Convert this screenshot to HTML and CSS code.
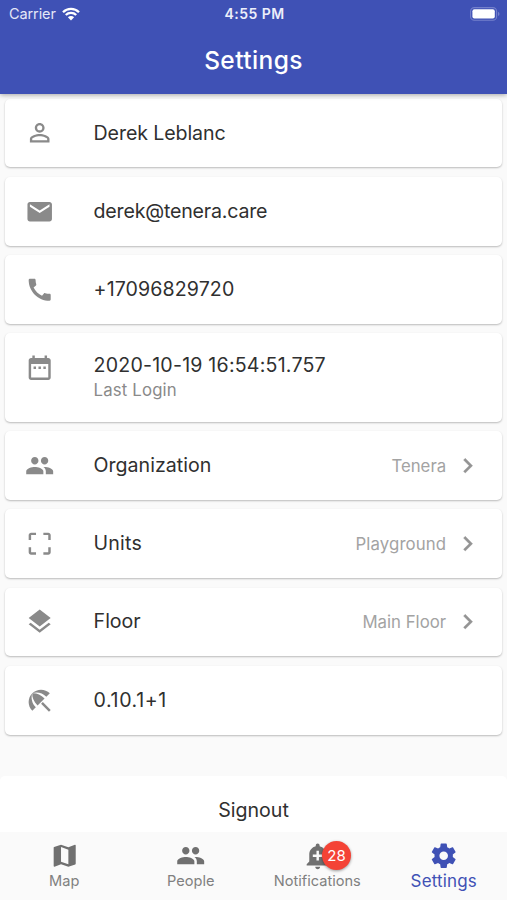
FILE: index.html
```html
<!DOCTYPE html>
<html lang="en">
<head>
  <meta charset="UTF-8">
  <title>Settings</title>
  <link rel="stylesheet" href="styles.css">
</head>
<body>
  <header class="header">
    <div class="status">
      <div class="carrier">
        <span>Carrier</span>
        <svg class="wifi" viewBox="0 0 18 14">
          <path d="M1 5.2a11.3 11.3 0 0 1 16 0M3.8 8a7.4 7.4 0 0 1 10.4 0" fill="none" stroke="#fff" stroke-width="2.3"/>
          <path d="M5.9 10.2a4.4 4.4 0 0 1 6.2 0L9 13.5z" fill="#fff"/>
        </svg>
      </div>
      <span class="time">4:55 PM</span>
      <svg class="battery" viewBox="0 0 30 14">
        <rect x=".6" y=".6" width="26" height="12.6" rx="3.8" fill="none" stroke="#7480cb" stroke-width="1.1"/>
        <rect x="2.4" y="2.3" width="22.4" height="9.2" rx="2" fill="#fff"/>
        <path d="M28 4.7c2 .8 2 3.6 0 4.4z" fill="#7480cb"/>
      </svg>
    </div>
    <h1 class="title">Settings</h1>
  </header>

  <main class="list">
    <div class="card">
      <svg class="icon" viewBox="0 0 24 24"><path d="M12 5.9a2.1 2.1 0 1 1 0 4.2 2.1 2.1 0 0 1 0-4.2m0 9c2.97 0 6.1 1.46 6.1 2.1v1.1H5.9V17c0-.64 3.13-2.1 6.1-2.1M12 4C9.79 4 8 5.79 8 8s1.79 4 4 4 4-1.79 4-4-1.79-4-4-4zm0 9c-2.67 0-8 1.34-8 4v3h16v-3c0-2.66-5.33-4-8-4z"/></svg>
      <span class="name t-name">Derek Leblanc</span>
    </div>
    <div class="card">
      <svg class="icon" viewBox="0 0 24 24"><path d="M20 4H4c-1.1 0-1.99.9-1.99 2L2 18c0 1.1.9 2 2 2h16c1.1 0 2-.9 2-2V6c0-1.1-.9-2-2-2zm0 4l-8 5-8-5V6l8 5 8-5v2z"/></svg>
      <span class="name t-mail">derek@tenera.care</span>
    </div>
    <div class="card">
      <svg class="icon" viewBox="0 0 24 24"><path d="M20.01 15.38c-1.23 0-2.42-.2-3.53-.56-.35-.12-.74-.03-1.01.24l-1.57 1.97c-2.83-1.35-5.48-3.9-6.89-6.83l1.95-1.66c.27-.28.35-.67.24-1.02-.37-1.11-.56-2.3-.56-3.53 0-.54-.45-.99-.99-.99H4.19C3.65 3 3 3.24 3 3.99 3 13.28 10.73 21 20.01 21c.71 0 .99-.63.99-1.18v-3.45c0-.54-.45-.99-.99-.99z"/></svg>
      <span class="name t-phone">+17096829720</span>
    </div>
    <div class="card tall">
      <svg class="icon" viewBox="0 0 24 24"><path d="M9 11H7v2h2v-2zm4 0h-2v2h2v-2zm4 0h-2v2h2v-2zm2-7h-1V2h-2v2H8V2H6v2H5c-1.11 0-1.99.9-1.99 2L3 20c0 1.1.89 2 2 2h14c1.1 0 2-.9 2-2V6c0-1.1-.9-2-2-2zm0 16H5V9h14v11z"/></svg>
      <div class="lines">
        <span class="name t-date">2020-10-19 16:54:51.757</span>
        <span class="sub">Last Login</span>
      </div>
    </div>
    <div class="card">
      <svg class="icon" viewBox="0 0 24 24"><path d="M16 11c1.66 0 2.99-1.34 2.99-3S17.66 5 16 5s-3 1.34-3 3 1.34 3 3 3zm-8 0c1.66 0 2.99-1.34 2.99-3S9.66 5 8 5 5 6.34 5 8s1.34 3 3 3zm0 2c-2.33 0-7 1.17-7 3.5V19h14v-2.5c0-2.33-4.67-3.5-7-3.5zm8 0c-.29 0-.62.02-.97.05 1.16.84 1.97 1.97 1.97 3.45V19h6v-2.5c0-2.33-4.67-3.5-7-3.5z"/></svg>
      <span class="name">Organization</span>
      <span class="value">Tenera</span>
      <svg class="chevron" viewBox="0 0 24 24"><path d="M10 6L8.59 7.41 13.17 12l-4.58 4.59L10 18l6-6z"/></svg>
    </div>
    <div class="card">
      <svg class="icon" viewBox="0 0 24 24"><path d="M3 5v4h2V5h4V3H5c-1.1 0-2 .9-2 2zm2 10H3v4c0 1.1.9 2 2 2h4v-2H5v-4zm14 4h-4v2h4c1.1 0 2-.9 2-2v-4h-2v4zm0-16h-4v2h4v4h2V5c0-1.1-.9-2-2-2z"/></svg>
      <span class="name t-units">Units</span>
      <span class="value t-playground">Playground</span>
      <svg class="chevron" viewBox="0 0 24 24"><path d="M10 6L8.59 7.41 13.17 12l-4.58 4.59L10 18l6-6z"/></svg>
    </div>
    <div class="card">
      <svg class="icon" viewBox="0 0 24 24"><path d="M11.99 18.54l-7.37-5.73L3 14.07l9 7 9-7-1.63-1.27-7.38 5.74zM12 16l7.36-5.73L21 9l-9-7-9 7 1.63 1.27L12 16z"/></svg>
      <span class="name">Floor</span>
      <span class="value">Main Floor</span>
      <svg class="chevron" viewBox="0 0 24 24"><path d="M10 6L8.59 7.41 13.17 12l-4.58 4.59L10 18l6-6z"/></svg>
    </div>
    <div class="card">
      <svg class="icon" viewBox="0 0 24 24"><path d="M13.127 14.56l1.43-1.43 6.44 6.443L19.57 21zm4.293-5.73l2.86-2.86c-3.95-3.95-10.35-3.96-14.3-.02 3.93-1.3 8.31-.25 11.44 2.88zM5.95 5.98c-3.94 3.95-3.93 10.35.02 14.3l2.86-2.86C5.7 14.29 4.65 9.91 5.95 5.98zm.02-.02l-.01.01c-.38 3.01 1.17 6.88 4.3 10.02l5.73-5.73c-3.13-3.13-7.01-4.68-10.02-4.3z"/></svg>
      <span class="name t-version">0.10.1+1</span>
    </div>
    <div class="signout"><span class="name">Signout</span></div>
  </main>

  <nav class="nav">
    <div class="tab">
      <svg class="icon" viewBox="0 0 24 24"><path d="M20.5 3l-.16.03L15 5.1 9 3 3.36 4.9c-.21.07-.36.25-.36.48V20.5c0 .28.22.5.5.5l.16-.03L9 18.9l6 2.1 5.64-1.9c.21-.07.36-.25.36-.48V3.5c0-.28-.22-.5-.5-.5zM15 19l-6-2.11V5l6 2.11V19z"/></svg>
      <span>Map</span>
    </div>
    <div class="tab">
      <svg class="icon" viewBox="0 0 24 24"><path d="M16 11c1.66 0 2.99-1.34 2.99-3S17.66 5 16 5s-3 1.34-3 3 1.34 3 3 3zm-8 0c1.66 0 2.99-1.34 2.99-3S9.66 5 8 5 5 6.34 5 8s1.34 3 3 3zm0 2c-2.33 0-7 1.17-7 3.5V19h14v-2.5c0-2.33-4.67-3.5-7-3.5zm8 0c-.29 0-.62.02-.97.05 1.16.84 1.97 1.97 1.97 3.45V19h6v-2.5c0-2.33-4.67-3.5-7-3.5z"/></svg>
      <span>People</span>
    </div>
    <div class="tab">
      <svg class="icon" viewBox="0 0 24 24"><path d="M10.01 21.01c0 1.1.89 1.99 1.99 1.99s1.99-.89 1.99-1.99h-3.98zm8.87-4.19V11c0-3.25-2.25-5.97-5.29-6.69v-.72C13.59 2.71 12.88 2 12 2s-1.59.71-1.59 1.59v.72C7.37 5.03 5.12 7.75 5.12 11v5.82L3 18.94V20h18v-1.06l-2.12-2.12zM16 13.01h-3v3h-2v-3H8V11h3V8h2v3h3v2.01z"/></svg>
      <b class="badge">28</b>
      <span>Notifications</span>
    </div>
    <div class="tab active">
      <svg class="icon" viewBox="0 0 24 24"><path d="M19.43 12.98c.04-.32.07-.64.07-.98s-.03-.66-.07-.98l2.11-1.65c.19-.15.24-.42.12-.64l-2-3.46c-.12-.22-.39-.3-.61-.22l-2.49 1c-.52-.4-1.08-.73-1.69-.98l-.38-2.65C14.46 2.18 14.25 2 14 2h-4c-.25 0-.46.18-.49.42l-.38 2.65c-.61.25-1.17.59-1.69.98l-2.49-1c-.23-.09-.49 0-.61.22l-2 3.46c-.13.22-.07.49.12.64l2.11 1.65c-.04.32-.07.65-.07.98s.03.66.07.98l-2.11 1.65c-.19.15-.24.42-.12.64l2 3.46c.12.22.39.3.61.22l2.49-1c.52.4 1.08.73 1.69.98l.38 2.65c.03.24.24.42.49.42h4c.25 0 .46-.18.49-.42l.38-2.65c.61-.25 1.17-.59 1.69-.98l2.49 1c.23.09.49 0 .61-.22l2-3.46c.12-.22.07-.49-.12-.64l-2.11-1.65zM12 15.5c-1.93 0-3.5-1.57-3.5-3.5s1.57-3.5 3.5-3.5 3.5 1.57 3.5 3.5-1.57 3.5-3.5 3.5z"/></svg>
      <span>Settings</span>
    </div>
  </nav>
</body>
</html>
```
FILE: styles.css
```css
* {
  box-sizing: border-box;
}

body {
  margin: 0;
  height: 900px;
  display: flex;
  flex-direction: column;
  overflow: hidden;
  background: #fafafa;
  color: #303030;
  font-family: Inter, "Liberation Sans", sans-serif;
}

.header {
  flex: none;
  height: 94px;
  background: #3f51b5;
  color: #fff;
  box-shadow: 0 1px 5px rgba(0, 0, 0, 0.35);
  z-index: 1;
}

.status {
  height: 27px;
  padding: 0 7px 0 9px;
  display: grid;
  grid-template-columns: 1fr auto 1fr;
  align-items: center;
  font-size: 14.5px;
}

.carrier {
  display: flex;
  align-items: center;
  gap: 6px;
  color: #e4e7f7;
}

.carrier span {
  letter-spacing: -0.1px;
}

.wifi {
  width: 18px;
  height: 14px;
}

.time {
  font-size: 14px;
  font-weight: 600;
  letter-spacing: 0.45px;
  color: #eceefa;
}

.battery {
  width: 30px;
  height: 14px;
  justify-self: end;
}

.title {
  margin: 0;
  line-height: 66px;
  text-align: center;
  font-size: 24.5px;
  font-weight: 500;
  letter-spacing: 0.4px;
}

/* cards */
.list {
  flex: 1;
  min-height: 0;
  overflow: hidden;
  padding-top: 4.7px;
}

.card {
  height: 68.6px;
  margin: 0 4.9px 9.65px 5.4px;
  padding: 0 19.6px;
  display: flex;
  align-items: center;
  background: #fff;
  border-radius: 5px;
  box-shadow: 0 1px 2px rgba(0, 0, 0, 0.26);
}

.tall {
  height: 88.2px;
  align-items: flex-start;
  padding-top: 19.6px;
}

.icon {
  flex: none;
  width: 29.4px;
  height: 29.4px;
  fill: #8a8a8a;
}

.name {
  font-size: 19.6px;
  line-height: 25px;
}

.card .icon {
  margin: 0 38.7px 0 0.5px;
}

/* tracking */
.t-name {
  padding-top: 1px;
  letter-spacing: -0.1px;
}

.t-mail {
  letter-spacing: -0.2px;
}

.t-phone {
  padding-top: 1px;
  letter-spacing: 0.1px;
}

.t-date {
  letter-spacing: 0.2px;
}

.t-units {
  letter-spacing: 0.2px;
}

.t-version {
  letter-spacing: 0.6px;
}

.lines {
  display: flex;
  flex-direction: column;
}

.sub {
  font-size: 16.8px;
  line-height: 25px;
  letter-spacing: 0.15px;
  color: #8a8a8a;
}

.value {
  margin-left: auto;
  font-size: 16.8px;
  color: #a3a3a3;
}

.t-playground {
  letter-spacing: 0.1px;
}

.chevron {
  width: 29.4px;
  height: 29.4px;
  margin: 0 0 0 7px;
  fill: #949494;
  stroke: #949494;
  stroke-width: 0.3;
}

.signout {
  height: 68.6px;
  margin-top: 41.4px;
  display: flex;
  align-items: center;
  justify-content: center;
  background: #fff;
  border-radius: 5px;
}

/* bottom tabs */
.nav {
  flex: none;
  height: 68px;
  padding-left: 1px;
  display: grid;
  grid-template-columns: repeat(4, 1fr);
  background: #fafafa;
}

.tab {
  position: relative;
  padding-top: 9px;
  display: flex;
  flex-direction: column;
  align-items: center;
  font-size: 14.6px;
  line-height: 23px;
  color: #808080;
}

.tab .icon {
  fill: #707070;
}

.active {
  color: #3f51b5;
  font-size: 17px;
  line-height: 22px;
  letter-spacing: 0.15px;
}

.active .icon {
  fill: #3f51b5;
}

.badge {
  position: absolute;
  top: 9px;
  left: 68px;
  width: 29px;
  height: 29px;
  border-radius: 50%;
  background: #f44336;
  color: #fff;
  font-size: 15px;
  font-weight: 400;
  line-height: 29px;
  text-align: center;
  box-shadow: 0 1px 3px rgba(0, 0, 0, 0.4);
}
```
